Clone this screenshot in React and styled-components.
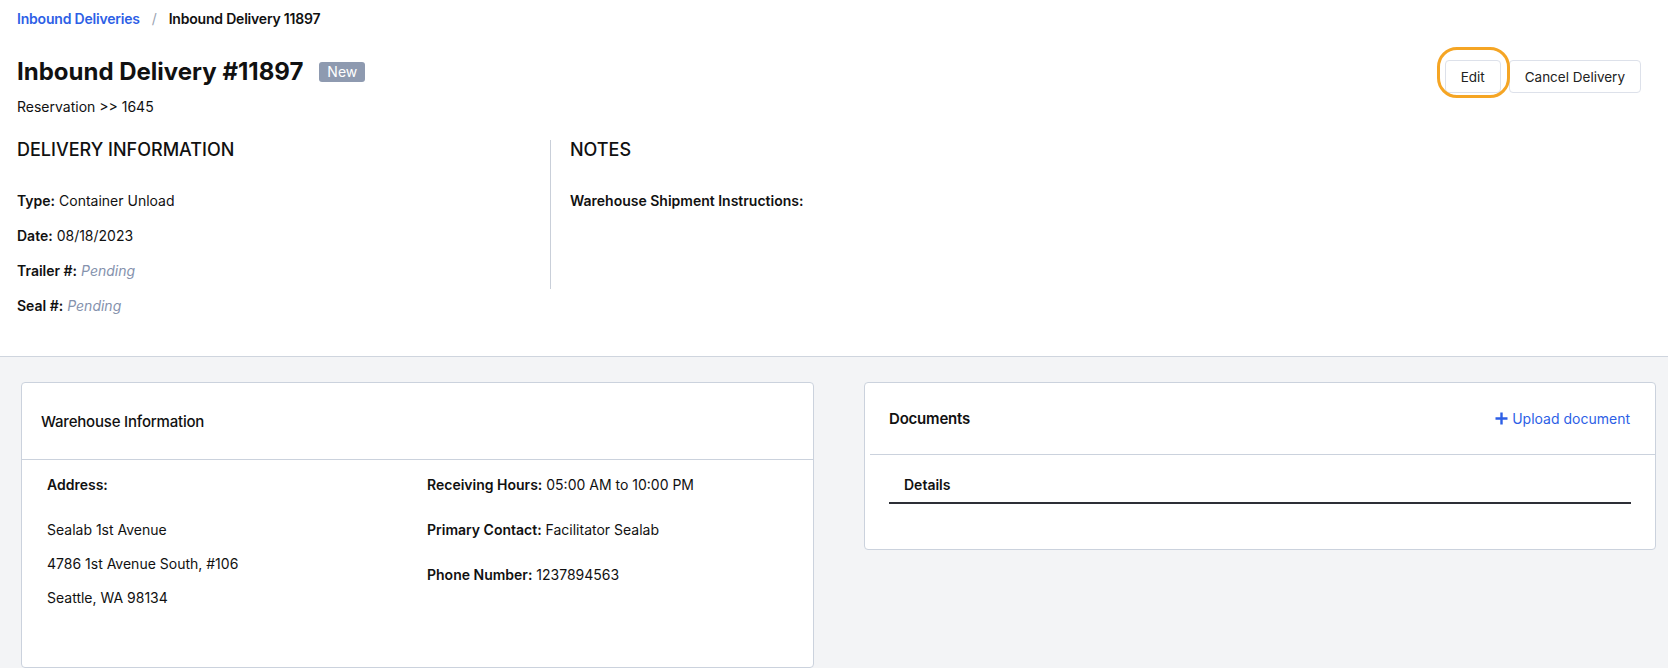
import React from 'react';
import styled, { createGlobalStyle } from 'styled-components';

const GlobalStyle = createGlobalStyle`
  body {
    margin: 0;
    background: #f3f4f6;
    font-family: Inter, 'Noto Sans', sans-serif;
    color: #111;
    font-size: 14px;
  }
`;

export default function App() {
  return (
    <>
      <GlobalStyle />
      <Header>
        <Breadcrumb>
          <Crumb href="#">Inbound Deliveries</Crumb>
          <Slash>/</Slash>
          <Current>Inbound Delivery 11897</Current>
        </Breadcrumb>
        <TitleRow>
          <TitleGroup>
            <Title>Inbound Delivery #11897</Title>
            <Badge>New</Badge>
          </TitleGroup>
          <Actions>
            <EditWrap>
              <Button>Edit</Button>
              <Highlight />
            </EditWrap>
            <Button>Cancel Delivery</Button>
          </Actions>
        </TitleRow>
        <Reservation>Reservation &gt;&gt; 1645</Reservation>
        <InfoSection>
          <InfoColumn>
            <SectionHeading>DELIVERY INFORMATION</SectionHeading>
            <Rows>
              <Field><Label>Type:</Label> Container Unload</Field>
              <Field><Label>Date:</Label> 08/18/2023</Field>
              <Field><Label>Trailer #:</Label> <Pending>Pending</Pending></Field>
              <Field><Label>Seal #:</Label> <Pending>Pending</Pending></Field>
            </Rows>
          </InfoColumn>
          <NotesColumn>
            <SectionHeading>NOTES</SectionHeading>
            <Rows>
              <Field><Label>Warehouse Shipment Instructions:</Label></Field>
            </Rows>
          </NotesColumn>
        </InfoSection>
      </Header>
      <Body>
        <Card $tall>
          <CardHeader $tall>
            <CardTitle $weight={500}>Warehouse Information</CardTitle>
          </CardHeader>
          <WarehouseGrid>
            <AddressColumn>
              <Field><Label>Address:</Label></Field>
              <AddressLines>
                <Field>Sealab 1st Avenue</Field>
                <Field>4786 1st Avenue South, #106</Field>
                <Field>Seattle, WA 98134</Field>
              </AddressLines>
            </AddressColumn>
            <ContactColumn>
              <Field><Label>Receiving Hours:</Label> 05:00 AM to 10:00 PM</Field>
              <Field><Label>Primary Contact:</Label> Facilitator Sealab</Field>
              <Field><Label>Phone Number:</Label> 1237894563</Field>
            </ContactColumn>
          </WarehouseGrid>
        </Card>
        <Card>
          <CardHeader $inset>
            <CardTitle $weight={600}>Documents</CardTitle>
            <UploadLink href="#">
              <svg width="13" height="13" viewBox="0 0 13 13">
                <path d="M6.5 0.5v12M0.5 6.5h12" stroke="#2d5fe6" strokeWidth="2.4" />
              </svg>
              Upload document
            </UploadLink>
          </CardHeader>
          <Tabs>
            <Tab>Details</Tab>
          </Tabs>
        </Card>
      </Body>
    </>
  );
}

const Header = styled.header`
  background: #fff;
  padding: 0 27px 40px 17px;
  border-bottom: 1px solid #cfd5de;
`;

const Breadcrumb = styled.nav`
  display: flex;
  align-items: center;
  padding-top: 5px;
  height: 28px;
  font-size: 14px;
  line-height: 20px;
  font-weight: 600;
  letter-spacing: -0.2px;
`;

const Crumb = styled.a`
  color: #2d5fe6;
  text-decoration: none;
`;

const Slash = styled.span`
  color: #9aa3b2;
  font-weight: 400;
  margin: 0 12px;
`;

const Current = styled.span`
  color: #111;
`;

const TitleRow = styled.div`
  display: flex;
  justify-content: space-between;
  align-items: flex-start;
  margin-top: 23px;
`;

const TitleGroup = styled.div`
  display: flex;
  align-items: center;
  gap: 16px;
  height: 32px;
`;

const Title = styled.h1`
  margin: 0;
  font-size: 24px;
  line-height: 32px;
  font-weight: 700;
  letter-spacing: 0;
`;

const Badge = styled.span`
  background: #8e9ab0;
  color: #fff;
  font-size: 14px;
  line-height: 20px;
  padding: 0 8px;
  border-radius: 3px;
`;

const Actions = styled.div`
  display: flex;
  gap: 8px;
  margin-top: 4px;
`;

const EditWrap = styled.div`
  position: relative;
`;

const Button = styled.button`
  height: 33px;
  padding: 0 15px;
  background: #fff;
  border: 1px solid #dde1ea;
  border-radius: 4px;
  font-family: inherit;
  font-size: 13.5px;
  color: #222;
  cursor: pointer;
`;

const Highlight = styled.span`
  position: absolute;
  left: -8px;
  right: -9px;
  top: -13px;
  bottom: -5px;
  border: 3px solid #f5a524;
  border-radius: 20px;
  pointer-events: none;
`;

const Reservation = styled.div`
  margin-top: 4px;
  line-height: 20px;
  font-size: 14px;
`;

const InfoSection = styled.div`
  display: flex;
  align-items: flex-start;
  margin-top: 23px;
`;

const InfoColumn = styled.div`
  width: 533px;
`;

const NotesColumn = styled.div`
  min-height: 149px;
  border-left: 1px solid #c9cfd9;
  padding-left: 19px;
`;

const SectionHeading = styled.h2`
  margin: 0;
  font-size: 18px;
  line-height: 20px;
  font-weight: 500;
`;

const Rows = styled.div`
  display: flex;
  flex-direction: column;
  gap: 15px;
  margin-top: 31px;
`;

const Field = styled.div`
  font-size: 14px;
  line-height: 20px;
`;

const Label = styled.b`
  font-weight: 600;
`;

const Pending = styled.i`
  color: #8592ad;
`;

const Body = styled.main`
  display: grid;
  grid-template-columns: 793px 792px;
  gap: 50px;
  align-items: start;
  padding: 25px 12px 0 21px;
`;

const Card = styled.section`
  background: #fff;
  border: 1px solid #cbd2dd;
  border-radius: 4px;
  min-height: ${(p) => (p.$tall ? '286px' : '163px')};
  box-sizing: border-box;
`;

const CardHeader = styled.div`
  display: flex;
  align-items: center;
  justify-content: space-between;
  height: ${(p) => (p.$tall ? '76px' : '71px')};
  padding: ${(p) => (p.$inset ? '0 25px 0 19px' : '0 19px')};
  margin-left: ${(p) => (p.$inset ? '5px' : '0')};
  border-bottom: 1px solid #cbd2dd;
`;

const CardTitle = styled.h3`
  margin: 0;
  font-size: 15px;
  font-weight: ${(p) => p.$weight};
  letter-spacing: -0.2px;
`;

const UploadLink = styled.a`
  display: flex;
  align-items: center;
  gap: 4px;
  color: #2d5fe6;
  text-decoration: none;
  font-size: 14px;
`;

const WarehouseGrid = styled.div`
  display: grid;
  grid-template-columns: 380px 1fr;
  padding: 15px 25px;
`;

const AddressColumn = styled.div``;

const AddressLines = styled.div`
  display: flex;
  flex-direction: column;
  gap: 14px;
  margin-top: 25px;
`;

const ContactColumn = styled.div`
  display: flex;
  flex-direction: column;
  gap: 25px;
`;

const Tabs = styled.div`
  margin: 13px 24px 45px 24px;
  border-bottom: 2px solid #2d2f36;
`;

const Tab = styled.div`
  padding: 0 15px;
  font-size: 14px;
  line-height: 20px;
  height: 34px;
  font-weight: 600;
  display: flex;
  align-items: center;
`;
